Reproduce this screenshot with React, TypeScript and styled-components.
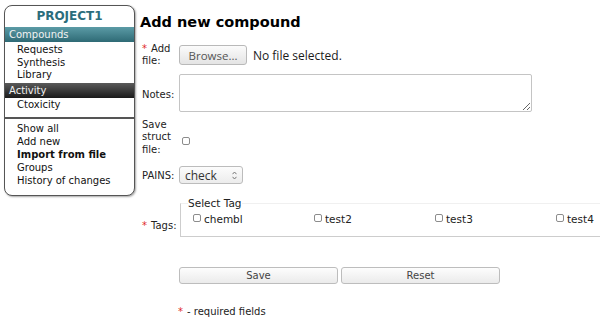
import React from 'react'
import styled, { createGlobalStyle } from 'styled-components'

const GlobalStyle = createGlobalStyle`
  html, body {
    margin: 0;
    padding: 0;
    overflow: hidden;
    background: #fff;
    font-family: 'DejaVu Sans', Verdana, sans-serif;
    font-size: 10px;
    color: #111;
  }
`

const Page = styled.div`
  display: flex;
  align-items: flex-start;
  width: 600px;
  height: 324px;
`

/* ---------- sidebar ---------- */

const Sidebar = styled.nav`
  flex: none;
  width: 129px;
  margin: 5px 0 0 4px;
  border: 1px solid #555;
  border-radius: 8px;
  background: #fff;
  box-shadow: 1px 1px 2px rgba(0, 0, 0, 0.35);
  overflow: hidden;
`

const ProjectTitle = styled.div`
  height: 21px;
  line-height: 21px;
  text-align: center;
  font-weight: bold;
  font-size: 12px;
  color: #2b6d7c;
`

const SectionBar = styled.div<{ $dark?: boolean }>`
  height: 15px;
  line-height: 15px;
  padding-left: 4px;
  font-size: 10px;
  color: #f2f2f2;
  background: ${(p) =>
    p.$dark
      ? 'linear-gradient(#5a5a5a, #1a1a1a)'
      : 'linear-gradient(#5b9ba6, #2e6a75)'};
`

const MenuList = styled.ul<{ $top?: number; $bottom?: number; $line?: number; $sep?: boolean }>`
  list-style: none;
  margin: 0;
  padding: ${(p) => p.$top ?? 2}px 0 ${(p) => p.$bottom ?? 1}px 12px;
  line-height: ${(p) => p.$line ?? 12.5}px;
  border-top: ${(p) => (p.$sep ? '2px solid #555' : 'none')};
`

const MenuItem = styled.li<{ $active?: boolean }>`
  font-weight: ${(p) => (p.$active ? 'bold' : 'normal')};
  white-space: nowrap;
`

/* ---------- main ---------- */

const Main = styled.main`
  flex: 1;
  min-width: 0;
  padding: 13px 0 0 5px;
`

const Heading = styled.h1`
  margin: 0 0 11px;
  font-size: 14.5px;
  line-height: 18px;
  font-weight: bold;
  color: #000;
`

const Form = styled.form`
  display: flex;
  flex-direction: column;
`

const Row = styled.div<{ $h: number }>`
  display: flex;
  align-items: center;
  height: ${(p) => p.$h}px;
`

const Label = styled.div<{ $pt?: number; $end?: boolean }>`
  flex: none;
  width: 37px;
  padding: ${(p) => p.$pt ?? 0}px 0 ${(p) => (p.$end ? 9 : 0)}px 2px;
  align-self: ${(p) => (p.$end ? 'flex-end' : 'auto')};
  line-height: 12.5px;
  color: #222;
`

const Star = styled.span`
  color: #e02a2a;
  padding-right: 4px;
`

const Field = styled.div`
  display: flex;
  align-items: center;
  gap: 6px;
`

const BrowseButton = styled.button`
  width: 68px;
  height: 20px;
  padding: 0;
  border: 1px solid #b9b9b9;
  border-radius: 3px;
  background: linear-gradient(#fbfbfb, #e4e4e4);
  font-family: 'Open Sans', 'DejaVu Sans', sans-serif;
  font-size: 11.5px;
  color: #555;
`

const FileNote = styled.span`
  font-family: 'Open Sans', 'DejaVu Sans', sans-serif;
  font-size: 12px;
  color: #1a1a1a;
`

const Notes = styled.textarea`
  box-sizing: border-box;
  width: 353px;
  height: 38px;
  border: 1px solid #c4c4c4;
  border-radius: 2px;
  margin: 0;
`

const Check = styled.input.attrs({ type: 'checkbox' })<{ $mt?: number }>`
  appearance: none;
  box-sizing: border-box;
  width: 8px;
  height: 8px;
  margin: ${(p) => p.$mt ?? 0}px 0 0 3px;
  border: 1px solid #8c8c8c;
  border-radius: 2px;
  background: #fff;
`

const SelectWrap = styled.div`
  position: relative;
  width: 64px;
  height: 18px;
`

const Select = styled.select`
  appearance: none;
  box-sizing: border-box;
  width: 100%;
  height: 100%;
  padding: 0 0 0 5px;
  border: 1px solid #bcbcbc;
  border-radius: 3px;
  background: linear-gradient(#fcfcfc, #ececec);
  font-family: 'Open Sans', 'DejaVu Sans', sans-serif;
  font-size: 12px;
  color: #333;
`

const Arrows = styled.svg`
  position: absolute;
  right: 6px;
  top: 5px;
  pointer-events: none;
`

const TagSet = styled.fieldset`
  flex: none;
  margin: 0 0 0 1px;
  padding: 3px 0 10px 12px;
  border: 1px solid #cdcdcd;
  border-top-color: #f0f0f0;
  border-right: none;
`

const Legend = styled.legend`
  margin-left: -5px;
  padding: 0;
  font-size: 10.5px;
  line-height: 13px;
  color: #222;
`

const TagRow = styled.div`
  display: flex;
`

const Tag = styled.label`
  display: flex;
  align-items: center;
  gap: 3px;
  width: 121px;
  line-height: 13px;
  font-size: 10.5px;
  color: #222;

  ${Check} {
    margin: -4px 0 0 0;
  }
`

const Buttons = styled.div`
  display: flex;
  gap: 3px;
  margin: 26px 0 0 39px;
`

const ActionButton = styled.button`
  width: 159px;
  height: 17px;
  padding: 0;
  border: 1px solid #bdbdbd;
  border-radius: 3px;
  background: linear-gradient(#fdfdfd, #ebebeb);
  font-family: 'DejaVu Sans', sans-serif;
  font-size: 10px;
  color: #444;
`

const Required = styled.div`
  margin: 22px 0 0 38px;
  color: #222;
`

const tags = ['chembl', 'test2', 'test3', 'test4']

export default function App() {
  return (
    <>
      <GlobalStyle />
      <Page>
        <Sidebar>
          <ProjectTitle>PROJECT1</ProjectTitle>
          <SectionBar>Compounds</SectionBar>
          <MenuList>
            <MenuItem>Requests</MenuItem>
            <MenuItem>Synthesis</MenuItem>
            <MenuItem>Library</MenuItem>
          </MenuList>
          <SectionBar $dark>Activity</SectionBar>
          <MenuList $top={1} $bottom={6}>
            <MenuItem>Ctoxicity</MenuItem>
          </MenuList>
          <MenuList $sep $top={3} $bottom={8} $line={13}>
            <MenuItem>Show all</MenuItem>
            <MenuItem>Add new</MenuItem>
            <MenuItem $active>Import from file</MenuItem>
            <MenuItem>Groups</MenuItem>
            <MenuItem>History of changes</MenuItem>
          </MenuList>
        </Sidebar>

        <Main>
          <Heading>Add new compound</Heading>
          <Form onSubmit={(e) => e.preventDefault()}>
            <Row $h={26}>
              <Label>
                <Star>*</Star>Add
                <br />
                file:
              </Label>
              <Field>
                <BrowseButton type="button">Browse...</BrowseButton>
                <FileNote>No file selected.</FileNote>
              </Field>
            </Row>
            <Row $h={50}>
              <Label $pt={5}>Notes:</Label>
              <Notes />
            </Row>
            <Row $h={39}>
              <Label>Save struct file:</Label>
              <Check $mt={7} />
            </Row>
            <Row $h={36}>
              <Label $pt={3}>PAINS:</Label>
              <SelectWrap>
                <Select defaultValue="check">
                  <option value="check">check</option>
                </Select>
                <Arrows width="5" height="9" viewBox="0 0 5 9">
                  <path d="M0.5 3.2 L2.5 1 L4.5 3.2 M0.5 5.8 L2.5 8 L4.5 5.8" fill="none" stroke="#777" strokeWidth="1" />
                </Arrows>
              </SelectWrap>
            </Row>
            <Row $h={48}>
              <Label $end>
                <Star>*</Star>Tags:
              </Label>
              <TagSet>
                <Legend>Select Tag</Legend>
                <TagRow>
                  {tags.map((t) => (
                    <Tag key={t}>
                      <Check />
                      {t}
                    </Tag>
                  ))}
                </TagRow>
              </TagSet>
            </Row>
            <Buttons>
              <ActionButton type="submit">Save</ActionButton>
              <ActionButton type="reset">Reset</ActionButton>
            </Buttons>
            <Required>
              <Star>*</Star>- required fields
            </Required>
          </Form>
        </Main>
      </Page>
    </>
  )
}
